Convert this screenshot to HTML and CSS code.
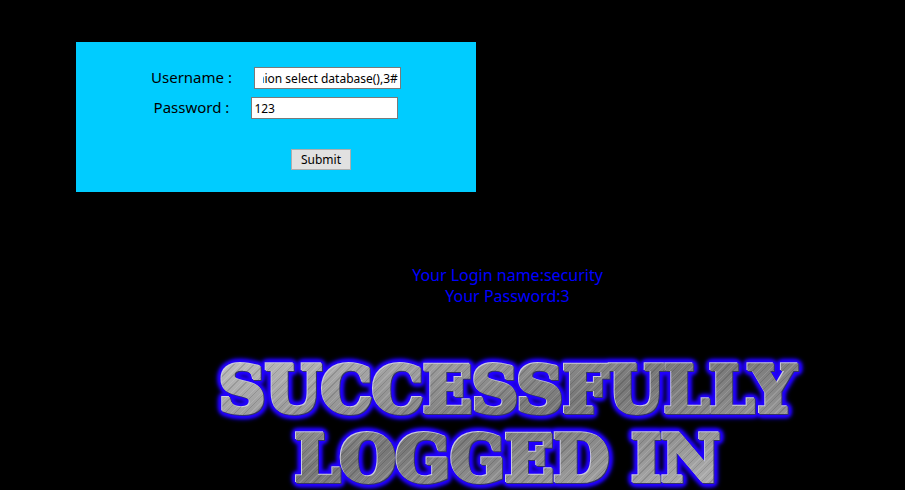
FILE: index.html
```
<!DOCTYPE html>
<html lang="en">
<head>
<meta charset="utf-8">
<title>Login</title>
<link rel="stylesheet" href="styles.css">
</head>
<body>
<form class="login">
  <div class="row">
    <label for="uname">Username :</label>
    <input class="field field-long" id="uname" type="text" value="1' union select database(),3#">
  </div>
  <div class="row">
    <label for="passwd">Password :</label>
    <input class="field" id="passwd" type="text" value="123">
  </div>
  <div class="actions"><button class="submit" type="button">Submit</button></div>
</form>
<main class="result">
  <p class="message">Your Login name:security<br>Your Password:3</p>
  <h1 class="banner"><span class="metal">SUCCESSFULLY<br>LOGGED IN</span></h1>
</main>
<script src="script.js"></script>
</body>
</html>
```
FILE: styles.css
```
body {
  margin: 0;
  background: #000;
  font-family: "Noto Sans", "Open Sans", sans-serif;
  overflow: hidden;
}
.login {
  box-sizing: border-box;
  width: 400px;
  margin: 42px 0 0 76px;
  padding: 25px 0 22px;
  background: #0cf;
  font-size: 15px;
  line-height: 20px;
}
.row {
  display: flex;
  justify-content: center;
  align-items: flex-start;
  gap: 22px;
  height: 22px;
  margin-bottom: 8px;
}
.field {
  box-sizing: border-box;
  width: 147px;
  height: 22px;
  padding: 1px 2px;
  border: 1px solid #7a7a7a;
  background: #fff;
  color: #000;
  font: 12px "Noto Sans", sans-serif;
}
.field-long {
  padding-left: 8px;
}
.actions {
  display: flex;
  justify-content: center;
  margin-top: 30px;
  padding-left: 90px;
}
.submit {
  width: 60px;
  height: 21px;
  padding: 0;
  border: 1px solid #adadad;
  background: #e1e1e1;
  color: #000;
  font: 12px "Noto Sans", sans-serif;
}
.result {
  margin: 73px 0 0 110px;
  text-align: center;
}
.message {
  margin: 0;
  color: #00f;
  font-size: 16px;
  line-height: 21px;
}
.banner {
  margin: 48px 0 0;
  font: bold 64px/69px "DejaVu Serif", serif;
  white-space: nowrap;
  filter: drop-shadow(0 0 2px #20f) drop-shadow(0 0 1px #20f) drop-shadow(0 0 2px #20f) drop-shadow(0 0 1px #20f);
}
.metal {
  display: block;
  color: transparent;
  -webkit-text-stroke: 4px transparent;
  background:
    repeating-linear-gradient(135deg, #fff2 0 1px, #0000 1px 3px, #0002 3px 4px, #0000 4px 7px),
    linear-gradient(165deg, #bbb 12%, #999 30%, #777 48%, #888 60%, #aaa 80%, #999);
  -webkit-background-clip: text;
  background-clip: text;
  filter: drop-shadow(-1px -1px 0 #ccd) drop-shadow(1px 1px 0 #336);
}
```
FILE: script.js
```
const uname = document.getElementById("uname");
uname.scrollLeft = uname.scrollWidth;
```
